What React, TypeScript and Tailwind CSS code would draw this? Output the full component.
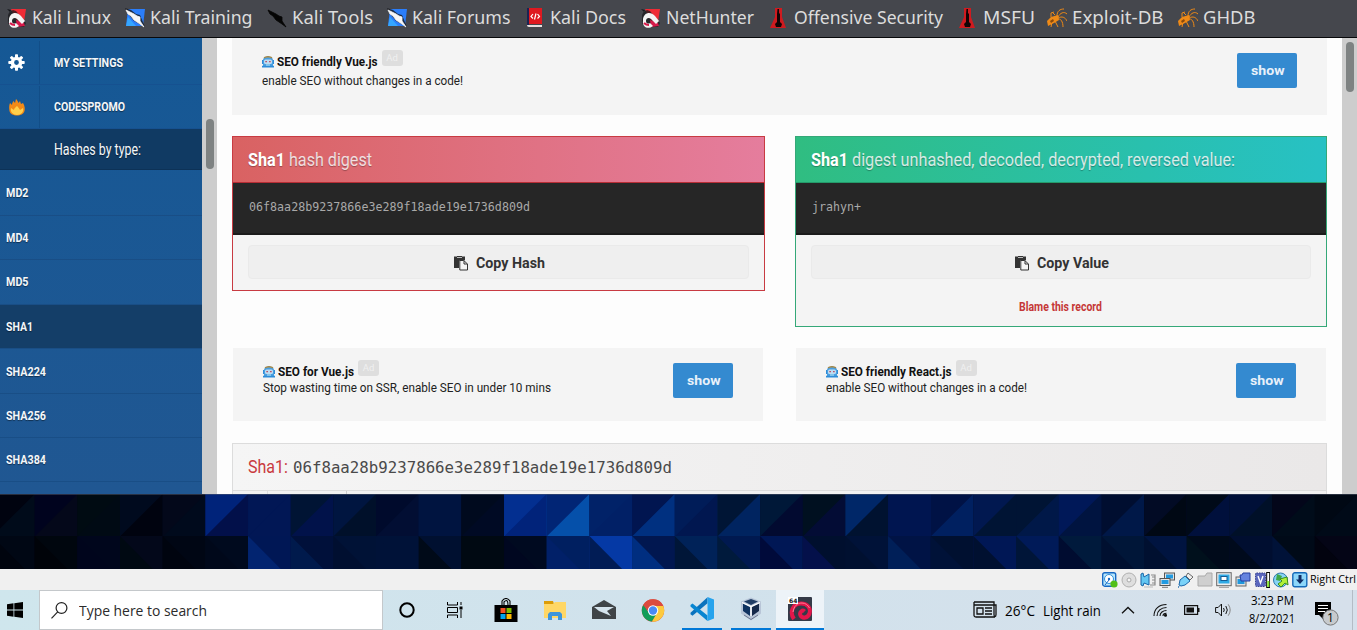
import React, { useLayoutEffect, useRef, useState, type ReactNode } from 'react';

/* Text squeezed or stretched horizontally to a given advance width. */
function Fit({ w, className = '', children }: { w: number; className?: string; children: ReactNode }) {
  const ref = useRef<HTMLSpanElement>(null);
  const [k, setK] = useState(1);
  useLayoutEffect(() => {
    if (ref.current && ref.current.offsetWidth) {
      setK(w / (ref.current.getBoundingClientRect().width || w));
    }
  }, [w]);
  return (
    <span className={`block shrink-0 whitespace-nowrap ${className}`} style={{ width: w }}>
      <span ref={ref} className="inline-block origin-left" style={{ transform: k === 1 ? undefined : `scaleX(${k})` }}>
        {children}
      </span>
    </span>
  );
}

/* ---------- bookmark icons ---------- */
const Magnet = () => (
  <svg className="h-5 w-5" viewBox="0 0 20 20">
    <path d="M4 1h15l-2 13-4 5z" fill="#ef2b35" />
    <path d="M0 1l4 1-1 2z" fill="#15171b" />
    <path d="M1 8q0-4 5-6l3 1 10 12-2 4H5q-5-2-4-8z" fill="#1a1a1e" opacity=".75" />
    <path d="M9 12l8 3 1 3-8 1z" fill="#d6194a" />
    <path d="M2 11C3 4 10 3 14 8l4 5-3 3-5-5c-2-2-5-1-5 2s3 3 4 2l3 3c-5 4-11 1-10-5z" fill="#f4f4f4" />
    <path d="M3 15c2 2 3 2 5 2" stroke="#d6194a" strokeWidth="2" fill="none" />
  </svg>
);
const Dragon = ({ dark = false }: { dark?: boolean }) => (
  <svg className="h-5 w-5" viewBox="0 0 20 20">
    {!dark && <path d="M3 1h17l-2 17H1z" fill="#2b7efb" />}
    {!dark && <path d="M1 18l2-9 8 9z" fill="#35a6ff" />}
    {!dark && <path d="M0 0l6 2 5 4 4 1 5 12-4-2-7-4-6-7z" fill="#17181c" opacity=".8" />}
    <path d="M1 2l4 2 4 2 3 2 3 1 0 4 4 6-4-3-3-2-3-2-3-4-3-2z" fill={dark ? '#050505' : '#f7f7f7'} stroke={dark ? '#050505' : '#f7f7f7'} strokeWidth=".8" />
  </svg>
);
const Docs = () => (
  <svg className="h-5 w-5" viewBox="0 0 20 20">
    <path d="M2 0h15v16H2z" fill="#df1920" />
    <path d="M2 0h2v17H2z" fill="#1c2352" />
    <path d="M2 17h15v2H4q-2 0-2-2z" fill="#e6dfe0" />
    <path d="M8 6L6 8.500l2 2M12.500 6l2 2.500-2 2M11 5.500l-1.500 6" stroke="#fff" strokeWidth="1.200" fill="none" />
  </svg>
);
const Offsec = () => (
  <svg className="h-5 w-5" viewBox="0 0 20 20">
    <path d="M6 0h7v9l4 11H1L6 9z" fill="#cf1a1f" />
    <path d="M8.500 1h1.500v4l1 1v8l2 2-1 3H7l-1-3 2-2V6z" fill="#120405" />
  </svg>
);
const Bug = () => (
  <svg className="h-5 w-5" viewBox="0 0 20 20" fill="none" stroke="#ef8a17" strokeWidth="1">
    <path d="M0 13l4-4 7-2 1 5-5 3-6 3z" fill="#ef8a17" stroke="none" />
    <path d="M10 8C10 3 13 1 17 1M11 9c2-4 6-6 9-3M11 10c4-2 7-1 9 3M10 11c4-1 6 3 6 8M8 13c1 2 2 4 3 6M5 14l-1 5M4 9V5l3-1M8 7l-3-3" />
    <path d="M3 13l3-2 1 2-3 2z" fill="#8a4a0c" stroke="none" />
  </svg>
);

const bookmarks = [
  { icon: <Magnet />, label: 'Kali Linux', w: 79, cell: 'w-[118px]' },
  { icon: <Dragon />, label: 'Kali Training', w: 102.5, cell: 'w-[142px]' },
  { icon: <Dragon dark />, label: 'Kali Tools', w: 81, cell: 'w-[120px]' },
  { icon: <Dragon />, label: 'Kali Forums', w: 98.5, cell: 'w-[138px]' },
  { icon: <Docs />, label: 'Kali Docs', w: 76, cell: 'w-[116px]' },
  { icon: <Magnet />, label: 'NetHunter', w: 88, cell: 'w-[128px]' },
  { icon: <Offsec />, label: 'Offensive Security', w: 149, cell: 'w-[189px]' },
  { icon: <Offsec />, label: 'MSFU', w: 52, cell: 'w-[89px]' },
  { icon: <Bug />, label: 'Exploit-DB', w: 91.5, cell: 'w-[131px]' },
  { icon: <Bug />, label: 'GHDB', w: 52.5, cell: 'w-[90px]' },
];

function BookmarksBar() {
  return (
    <div className="flex h-[38px] shrink-0 items-center border-b border-b-[#08090b] bg-[#45474d] pb-px pl-[7px] font-['Noto_Sans',sans-serif] text-[17.5px] text-[#dcdcdc]">
      {bookmarks.map((b) => (
        <div key={b.label} className={`flex shrink-0 items-center gap-[5px] ${b.cell}`}>
          {b.icon}
          <Fit w={b.w} className="h-9 leading-[34px]">{b.label}</Fit>
        </div>
      ))}
    </div>
  );
}

/* ---------- sidebar ---------- */
const Gear = () => (
  <svg className="h-[17px] w-[17px]" viewBox="0 0 17 17">
    <g fill="#fff">
      <path fillRule="evenodd" d="M8.500 2.700a5.800 5.800 0 1 0 0 11.600 5.800 5.800 0 0 0 0-11.600zm0 3.400a2.400 2.400 0 1 1 0 4.800 2.400 2.400 0 0 1 0-4.800z" />
      {[0, 45, 90, 135, 180, 225, 270, 315].map((a) => (
        <rect key={a} x="7" y=".3" width="3" height="3.500" rx=".7" transform={`rotate(${a} 8.500 8.500)`} />
      ))}
    </g>
  </svg>
);
const Flame = () => (
  <svg className="h-[18px] w-[18px]" viewBox="0 0 18 18">
    <path d="M8 1c1 1 2 2 2.500 4L12 3l1 3 2-1c2 3 2 6 1.500 8-.8 3-4 4.500-7.500 4.500s-7-1.500-7.500-4.500C1 10 1 7 2 5l2 2c0-1 .5-3 1.500-4L7 5z" fill="#f28a17" />
    <path d="M9 8c1 1 2 2 3 4l3-2c1 4-2 7-6 7s-7-3-6-7l3 2c0-2 2-3 3-4z" fill="#ffcf4a" />
  </svg>
);

const rows = [
  { label: 'MD2', w: 22.5, cell: 'h-[46px]' },
  { label: 'MD4', w: 22.5, cell: 'h-[44px]' },
  { label: 'MD5', w: 22.5, cell: 'h-[45px] pb-px' },
  { label: 'SHA1', w: 27, cell: 'h-[44px] bg-[#143e68]' },
  { label: 'SHA224', w: 40, cell: 'h-[45px] pt-px' },
  { label: 'SHA256', w: 40, cell: 'h-[44px]' },
  { label: 'SHA384', w: 40, cell: 'h-[44px] pt-px' },
];

function Sidebar() {
  return (
    <div className="flex h-full w-[202px] shrink-0 flex-col bg-linear-to-b from-[#155895] to-[#205792] font-['Roboto',sans-serif] text-[#f4f7fa] text-shadow-[0_1px_1px_rgb(0_0_0/0.45)]">
      {[
        { icon: <Gear />, label: 'MY SETTINGS', w: 69, cell: 'h-[47px] pt-[3px]' },
        { icon: <Flame />, label: 'CODESPROMO', w: 71, cell: 'h-[44px] pt-[1px]' },
      ].map((s) => (
        <div key={s.label} className={`flex shrink-0 items-center border-b border-[#165190] ${s.cell}`}>
          <div className="flex h-full w-10 items-center justify-center border-r border-[#124e88] pr-[6px]">{s.icon}</div>
          <Fit w={s.w} className="ml-[14px] text-[12px] font-bold">{s.label}</Fit>
        </div>
      ))}
      <div className="flex h-[41px] shrink-0 items-center border-b border-[#0d3257] bg-[#103a63] pl-[54px] pt-px">
        <Fit w={87} className="text-[16px]">Hashes by type:</Fit>
      </div>
      {rows.map((r) => (
        <div key={r.label} className={`flex shrink-0 items-center border-b border-[#194e86] pl-[6px] ${r.cell}`}>
          <Fit w={r.w} className="text-[12px] font-bold">{r.label}</Fit>
        </div>
      ))}
    </div>
  );
}

/* ---------- page content ---------- */
const Robot = () => (
  <svg className="h-3 w-3 shrink-0" viewBox="0 0 12 12">
    <path d="M1 4q0-3 5-3t5 3v7H1z" fill="#4a9fe0" />
    <path d="M2 1.800q4-2.200 8 0" stroke="#a08a52" strokeWidth="1.500" fill="none" />
    <rect x="2" y="3.500" width="8" height="4.500" rx="1.500" fill="#bcdcf2" />
    <path d="M3.300 5h1.700v1.300H3.300zM7 5h1.700v1.300H7z" fill="#b8506a" />
    <path d="M0 4h1v4H0zM11 4h1v4h-1zM0 9.800h12v1.700H0z" fill="#2e8cd8" />
    <path d="M4 9h4" stroke="#dff" strokeWidth=".8" />
  </svg>
);
const Paste = () => (
  <svg className="h-4 w-4" viewBox="0 0 16 16">
    <path d="M1 1.500h3V1h5v.5h3V5H9L6 6v7H1z" fill="#333" />
    <path d="M4 2.500h5" stroke="#bbb" strokeWidth="1" />
    <path d="M6.800 5.500h4l3.700 3.500v6H6.800z" fill="#f5f5f5" stroke="#333" />
    <path d="M11 5.500V9h3.500" fill="none" stroke="#333" />
  </svg>
);

function Ad({ title, tw, body, bw, className, gap }: { title: string; tw: number; body: string; bw: number; className: string; gap: string }) {
  return (
    <div className={`flex items-start justify-between bg-[#f4f4f4] px-[30px] font-['Roboto',sans-serif] text-[12px] ${className}`}>
      <div className={`flex flex-col pt-px ${gap}`}>
        <div className="flex h-4 items-center">
          <Robot />
          <Fit w={tw} className="ml-[3px] font-bold text-[#111]">{title}</Fit>
          <span className="relative -top-1 ml-[4px] flex h-4 w-[21px] items-center justify-center rounded-[3px] bg-[#dedede] text-[9.5px] text-[#f0f0f0]">Ad</span>
        </div>
        <Fit w={bw} className="leading-4 text-[#222]">{body}</Fit>
      </div>
      <button className="flex h-[35px] w-[60px] items-center justify-center rounded-[2px] bg-[#348ad0] pr-[2px] pt-px text-[13px] font-bold text-[#e8f1fa]">
        <Fit w={33.5}>show</Fit>
      </button>
    </div>
  );
}

function HashCard({ title, tw, value, vw, copy, cw, card, head, extra }: { title: string; tw: number; value: string; vw: number; copy: string; cw: number; card: string; head: string; extra?: ReactNode }) {
  return (
    <div className={`flex flex-col border bg-[#f4f4f4] font-['Roboto',sans-serif] ${card}`}>
      <div className={`flex h-[46px] shrink-0 items-center border-b pl-[15px] text-[18px] text-white/80 text-shadow-[0_1px_1px_rgb(0_0_0/0.3)] ${head}`}>
        <Fit w={37} className="font-bold text-white">Sha1</Fit>
        <Fit w={tw} className="ml-1">{title}</Fit>
      </div>
      <div className="flex h-[52px] shrink-0 items-center border-b-2 border-[#1b1b1b] bg-[#262626] pb-[2px] pl-[16px] font-['DejaVu_Sans_Mono',monospace] text-[13px] text-[#a9a9a9]">
        <Fit w={vw}>{value}</Fit>
      </div>
      <div className="px-[15px] pt-[10px]">
        <button className="flex h-[34px] w-full items-center justify-center rounded-[4px] border border-[#eaeaea] bg-[#efefef] pt-[2px] text-[14px] font-bold text-[#333]">
          <Paste />
          <Fit w={cw} className="ml-[7px]">{copy}</Fit>
        </button>
      </div>
      {extra}
    </div>
  );
}

function Content() {
  return (
    <div className="flex h-full min-w-0 flex-1 flex-col bg-[#fdfdfd] px-[15px]">
      <Ad title="SEO friendly Vue.js" tw={100.5} body="enable SEO without changes in a code!" bw={201} gap="gap-[3px]" className="h-[77px] shrink-0 pt-[15px]" />
      <div className="mt-[21px] flex h-[212px] shrink-0 items-start gap-[30px]">
        <HashCard
          title="hash digest" tw={83} value="06f8aa28b9237866e3e289f18ade19e1736d809d" vw={281} copy="Copy Hash" cw={69}
          card="h-[155px] w-[533px] border-[#c83b42]" head="border-[#b72d35] bg-linear-to-r from-[#d96262] to-[#e57d9d]"
        />
        <HashCard
          title="digest unhashed, decoded, decrypted, reversed value:" tw={383} value="jrahyn+" vw={49} copy="Copy Value" cw={72}
          card="h-[191px] w-[532px] border-[#35a878]" head="border-[#259a6a] bg-linear-to-r from-[#30bd81] to-[#27c1c4]"
          extra={
            <div className="flex h-[54px] items-center justify-center pr-px pt-2 text-[12px] font-bold text-[#c53737]">
              <Fit w={83}>Blame this record</Fit>
            </div>
          }
        />
      </div>
      <div className="flex shrink-0 gap-[33px] px-px">
        <Ad title="SEO for Vue.js" tw={76} body="Stop wasting time on SSR, enable SEO in under 10 mins" bw={288} gap="gap-0" className="h-[73px] w-[530px] pt-[15px]" />
        <Ad title="SEO friendly React.js" tw={110.5} body="enable SEO without changes in a code!" bw={201} gap="gap-0" className="h-[73px] w-[530px] pt-[15px]" />
      </div>
      <div className="mt-[22px] flex min-h-0 flex-1 flex-col border border-b-0 border-[#dcdcdc] bg-[#f1f1f1]">
        <div className="flex h-[47px] shrink-0 items-center border-b border-[#dcdcdc] bg-linear-to-r from-[#f5f5f5] to-[#eae8e8] pl-[15px]">
          <Fit w={40} className="pb-px font-['Roboto',sans-serif] text-[18px] text-[#c93a3e]">Sha1:</Fit>
          <Fit w={379} className="ml-[5px] pt-[3px] font-['DejaVu_Sans_Mono',monospace] text-[15px] text-[#4a4a4a]">06f8aa28b9237866e3e289f18ade19e1736d809d</Fit>
        </div>
        <div className="flex h-[4px] shrink-0">
          <div className="w-[35px] border-r border-[#ddd]" />
          <div className="w-[79px] border-r border-[#ccc]" />
        </div>
      </div>
    </div>
  );
}

/* ---------- desktop wallpaper ---------- */
/* Each pair holds the two triangles of one tile. */
const topTiles = '00030f000b1a 00031e04081a 000b12000a14 000a1e00030f 03081a000a1c 00237a02104a 011755011755 00143401124a 00154000102a 000a2c020e33 001440001440 000a1e000a24 032f9001237a 0125750550aa 012268012066 011550003080 001c58011750 001535002460 001838020a30 001020030c35 002768001230 001550001550 001245002060 011850001434 001434001848 001858001440 000e30001848 020b25000814 000a1800103c 001038001028 03061a000c1a 000814000a18'.split(' ');
const lowTiles = '00071400040e 00060e000309 00061c00051c 03081a000912 00061400040f 000a1e00081a 001755022470 00103a001a4c 001236000f30 001238001238 001030000a18 000912000912 000a20000720 001f60012068 0539a5011c55 011750002e80 002258001638 001950001a3c 001755000a3a 000f2e04104a 001238001030 001345001f58 001030001238 001755001030 001a58001538 001a3c000c30 001638001030 001440001030 000a1a00101c 000e30000a1c 000a18001238 04051602030f'.split(' ');

function Wallpaper() {
  const s = 42.67;
  return (
    <svg className="block h-[75px] w-full shrink-0 bg-[#000a1a]" viewBox="0 0 1357 75">
      {topTiles.map((t, i) => {
        const x = -8 + i * s;
        return (
          <g key={i}>
            <rect x={x} y="0" width={s + 0.5} height="42.500" fill={`#${t.slice(6)}`} />
            <polygon points={`${x},0 ${x + s},0 ${x},42.500`} fill={`#${t.slice(0, 6)}`} />
          </g>
        );
      })}
      {lowTiles.map((t, i) => {
        const x = -8 + i * s;
        return (
          <g key={i}>
            <rect x={x} y="42" width={s + 0.5} height="43" fill={`#${t.slice(0, 6)}`} />
            <polygon points={`${x},42 ${x + s},85 ${x},85`} fill={`#${t.slice(6)}`} />
          </g>
        );
      })}
      <path d="M0 .3h1357" stroke="#555e70" strokeWidth=".6" />
    </svg>
  );
}

/* ---------- virtual machine status bar ---------- */
const vmIcons: ReactNode[] = [
  <g key="hd"><rect x=".7" y=".7" width="13" height="13.500" rx="2" fill="#b9e6fb" stroke="#1769c4" strokeWidth="1.400" /><circle cx="7" cy="7" r="4.500" fill="#fff" stroke="#2f92dd" /><circle cx="7" cy="7" r="1.200" fill="#1769c4" /><path d="M3 13l4-5" stroke="#1769c4" /><circle cx="12" cy="12" r="3.600" fill="#52bf18" /></g>,
  <g key="cd"><circle cx="8" cy="8" r="7" fill="#dedede" stroke="#b0b0b0" /><circle cx="8" cy="8" r="2" fill="#f5f5f5" stroke="#a8a8a8" /></g>,
  <g key="audio"><path d="M1 2l2-1 1 4 5-3v11l-5-2-1 3-2-1z" fill="#62c6f2" stroke="#1865a8" /><path d="M11 3h4v10h-5M12 5h3M12 8h3M12 11h3" stroke="#8b8b8b" strokeWidth="1.200" fill="none" /><path d="M4 15h9" stroke="#bbb" /></g>,
  <g key="net"><rect x="5.500" y="1" width="10" height="7" fill="#e4e4e4" stroke="#555" /><path d="M7 2.500h7v4H7z" fill="#229ae0" /><rect x="1" y="6.500" width="10" height="7" fill="#e4e4e4" stroke="#555" /><path d="M2.500 8h7v4h-7z" fill="#229ae0" /><path d="M3 15.300h6" stroke="#777" /></g>,
  <g key="usb"><path d="M10 1l5 4-3 3-4-4z" fill="#eee" stroke="#666" /><path d="M2 8l5-4 5 5-5 4-4 1-2-1z" fill="#7ad2f8" stroke="#1d68aa" /><path d="M1 14l-1 2" stroke="#2d72ad" /></g>,
  <g key="share"><path d="M1 4h7l2-3h5v13H1z" fill="#cfcfcf" stroke="#aaa" /></g>,
  <g key="display"><rect x=".7" y=".7" width="14.500" height="13" fill="#eee" stroke="#666" /><rect x="2.500" y="2.500" width="11" height="9" fill="#2faae5" /><rect x="5" y="4.500" width="6" height="4" fill="#fff" stroke="#155c94" /><path d="M3 15.300h10" stroke="#999" /></g>,
  <g key="rec"><rect x="1" y="5" width="10" height="9" fill="#e2e2e2" stroke="#666" /><rect x="2.500" y="7" width="7" height="5" fill="#2098dd" /><path d="M5 3h2l1-2h7v8H6z" fill="#6583df" stroke="#273f9e" /></g>,
  <g key="cpu"><rect x="1.500" y="1" width="10" height="13.500" rx="1" fill="#5a66bd" stroke="#3a438f" strokeDasharray="1.500 1" /><path d="M4 4l2.500 7L9 4" stroke="#fff" strokeWidth="1.400" fill="none" /><rect x="12.700" y=".5" width="3" height="15" fill="#fff" stroke="#000" /><path d="M13.300 9h1.900v6h-1.900z" fill="#83e629" /></g>,
  <g key="mouse"><circle cx="7.500" cy="8" r="7" fill="#87d3f5" stroke="#2d78aa" /><path d="M4 2l5 2-2 5-4-1z" fill="#3fa846" /><path d="M7 7l7-2 1 8-3-2-4 4-3-3 4-3z" fill="#b2ef38" stroke="#3a8f1c" /></g>,
  <g key="host"><rect x=".8" y=".8" width="14" height="14" rx="2" fill="#8dd7fa" stroke="#1469b8" strokeWidth="1.400" /><path d="M6.500 3h3v4.500H12L8 12 4 7.500h2.500z" fill="#102e65" /></g>,
];

function VmStatusBar() {
  return (
    <div className="flex h-[21px] shrink-0 items-center justify-end gap-[3px] bg-[#f0f0f0]">
      {vmIcons.map((g, i) => (
        <svg key={i} className="h-4 w-4 shrink-0" viewBox="0 0 16 16">{g}</svg>
      ))}
      <Fit w={46} className="-ml-px mr-px font-['Open_Sans',sans-serif] text-[11px] text-black">Right Ctrl</Fit>
    </div>
  );
}

/* ---------- taskbar ---------- */
const apps: { key: string; svg: ReactNode; cls: string }[] = [
  {
    key: 'store', cls: '',
    svg: <g><path d="M8 7V3q4-5 8 0v4M10 7V4q4-4 4 3" fill="none" stroke="#000" strokeWidth="1.100" /><path d="M.5 7h23v17H.5z" fill="#000" /><path d="M6.500 10h5v5h-5z" fill="#f25022" /><path d="M12.500 10h5v5h-5z" fill="#7fba00" /><path d="M6.500 16h5v5h-5z" fill="#00a4ef" /><path d="M12.500 16h5v5h-5z" fill="#ffb900" /></g>,
  },
  {
    key: 'files', cls: '',
    svg: <g><path d="M1 3h9l1 3H1z" fill="#dc9c08" /><path d="M1 6h9l2-2h11v16H1z" fill="#ffd766" /><path d="M5 22v-6l2-2h10l2 2v6h-4v-4H9v4z" fill="#3c95dc" /></g>,
  },
  {
    key: 'mail', cls: '',
    svg: <g><path d="M0 9l12-7 12 7v12H0z" fill="#3f4447" /><path d="M2 9h20l-7 4 4 5-12-5z" fill="#d5e4ed" /></g>,
  },
  {
    key: 'chrome', cls: '',
    svg: <g><circle cx="12" cy="12.500" r="11.200" fill="#dc4b3e" /><path d="M12 12.500L2.200 7A11.200 11.200 0 0 0 11 23.600l5.500-8.600z" fill="#109d59" /><path d="M12 8h10.300A11.200 11.200 0 0 1 11 23.600L16 15z" fill="#fdca3e" /><path d="M2.200 7A11.200 11.200 0 0 1 22.300 8H12a5 5 0 0 0-4.700 6z" fill="#dc4b3e" /><circle cx="12" cy="12.500" r="5.200" fill="#fff" /><circle cx="12" cy="12.500" r="4.200" fill="#4a8af4" /></g>,
  },
  {
    key: 'code', cls: 'border-b-2 border-[#0078d7] mx-[4.5px] w-[40px]',
    svg: <g><path d="M17.500 6L2.500 18.500.500 17V15.500L17.500 0z" fill="#0a72bd" transform="translate(0 .3)" /><path d="M17.500 18.500L2.500 6.500.500 8v1.500l17 14.500z" fill="#0785d1" /><path d="M17.500 0L24 2.500v19L17.500 24z" fill="#26a3ed" /></g>,
  },
  {
    key: 'vbox', cls: 'border-b-2 border-[#0078d7] mx-[4.5px] w-[40px]',
    svg: <g><path d="M12 .5l10 4v12l-10 7-10-7v-12z" fill="#b8c5d7" /><path d="M12 2l7 2.500-7 3.500-7-3.500z" fill="#203d65" /><path d="M4 6.500l7 3.500v9L4 14z" fill="#0f3260" /><path d="M20 6.500L13 10v9l7-5z" fill="#15294a" /><path d="M12 9v10M3 5.500l9 4 9-4" stroke="#fff" strokeWidth="1.200" fill="none" /><path d="M5 18l7 4.500 7-4.500" stroke="#6d7891" fill="none" /></g>,
  },
  {
    key: 'vm', cls: 'border-b-2 border-[#0078d7] bg-[#edf3f8] w-[48px] ml-px',
    svg: <g><rect width="24" height="24" rx="1" fill="#343a48" /><path d="M6 22C1 15 5 6.500 13 6.500c7 0 10 5 8.500 10-1.500 4.500-7 5.500-9 2-1.500-3.500 2-6 4-4" fill="none" stroke="#e3164a" strokeWidth="4" /><path d="M5 15c1-6 4-9 9-9 4 0 6 2.500 7.500 5" fill="none" stroke="#ff7d94" strokeWidth="1" /><path d="M0 0h10v7H0z" fill="#fff" /><text x="1" y="5.700" fontSize="6" fontWeight="700" fontFamily="DejaVu Sans" fill="#111">64</text></g>,
  },
];

function Taskbar() {
  return (
    <div className="flex h-10 shrink-0 items-center bg-linear-to-r from-[#cfe6ed] via-[#d1e2ec] to-[#d6e0eb] font-['Open_Sans',sans-serif] text-black">
      <div className="flex w-[39px] shrink-0 items-center pl-[7px]">
        <svg className="h-4 w-4" viewBox="0 0 16 16"><path d="M0 2.200L6.500 1.300v6.200H0zM7.300 1.200L16 0v7.500H7.300zM0 8.400h6.500v6.300L0 13.800zM7.300 8.400H16V16l-8.700-1.200z" /></svg>
      </div>
      <div className="flex h-10 w-[344px] shrink-0 items-center border border-[#c4c8cb] bg-white pl-[11px]">
        <svg className="h-[17px] w-[17px]" viewBox="0 0 17 17" fill="none" stroke="#222" strokeWidth="1.200"><circle cx="10.500" cy="6" r="5.400" /><path d="M6.700 9.800L.5 16.300" /></svg>
        <Fit w={128} className="ml-[11px] pt-px text-[14.5px] text-[#2b2b2b]">Type here to search</Fit>
      </div>
      <div className="flex w-12 shrink-0 justify-center">
        <svg className="h-4 w-4" viewBox="0 0 16 16"><circle cx="8" cy="8" r="6.700" fill="none" stroke="#000" strokeWidth="2" /></svg>
      </div>
      <div className="mr-[2px] flex w-12 shrink-0 justify-center">
        <svg className="h-4 w-[17px]" viewBox="0 0 17 16" fill="none" stroke="#000"><path d="M.5 0v3h10V0M.5 5.500h10v5H.5zM.5 16v-3h10v3M14 0v3M14 8v8" /><path d="M12.500 4.500h3v3h-3z" fill="#000" stroke="none" /></svg>
      </div>
      {apps.map((a) => (
        <div key={a.key} className={`flex h-10 shrink-0 items-center justify-center ${a.cls || 'w-[49px]'}`}>
          <svg className="h-6 w-6 shrink-0" viewBox="0 0 24 24">{a.svg}</svg>
        </div>
      ))}
      <div className="ml-auto flex h-10 w-[384px] shrink-0 items-center">
        <svg className="h-[18px] w-6" viewBox="0 0 24 18" fill="none" stroke="#111" strokeWidth="1.300"><path d="M1 1h20v12.500q0 2 1 2t1-2V4h-2M1 1v13.500q0 1.500 2 1.500h19M1 4h20M4 7h6v6H4zM12 7h7M12 10h7M12 13h7" /></svg>
        <Fit w={30} className="ml-[8px] pt-px text-[14px]">26°C</Fit>
        <Fit w={58} className="ml-[8px] pt-px text-[14px]">Light rain</Fit>
        <svg className="ml-[20px] h-[8px] w-[14px]" viewBox="0 0 14 8"><path d="M1 7.300L7 1.500l6 5.800" fill="none" stroke="#111" strokeWidth="1.300" /></svg>
        <svg className="ml-[18px] h-[14px] w-[15px]" viewBox="0 0 15 14" fill="none" stroke="#111" strokeWidth="1.100"><path d="M1 13C1 6 6 1.500 13.500 1.500M4 13c0-5 4-8.500 9.500-8.500M7 13c0-3.300 3-5.500 6.500-5.500M10 13c0-2 1.500-2.700 3.500-2.700" /><circle cx="12.500" cy="12.300" r="1" fill="#111" /></svg>
        <svg className="ml-[16px] h-[10px] w-[16px]" viewBox="0 0 16 10"><path d="M.6.600h13v8.800H.6z" fill="none" stroke="#111" strokeWidth="1.200" /><path d="M2.500 2.500h7.500v5H2.500zM14 3h1.500v4H14z" fill="#111" /></svg>
        <svg className="ml-[15px] h-[14px] w-[17px]" viewBox="0 0 17 14" fill="none" stroke="#111"><path d="M.6 4.500h2.500L6.500 1v12L3.100 9.500H.6zM8.500 5q1.500 2 0 4M10.800 3q3 4 0 8" /><path d="M13.200 1.300q4 5.700 0 11.400" stroke="#888" /></svg>
        <div className="ml-[17px] flex h-10 w-[46px] flex-col items-center justify-center gap-[2px] text-[12px] leading-4">
          <Fit w={43}>3:23 PM</Fit>
          <Fit w={46}>8/2/2021</Fit>
        </div>
        <svg className="ml-[20px] mt-[8px] h-[26px] w-[25px]" viewBox="0 0 25 26">
          <path d="M0 1h16v13H8v4l-4-4H0z" fill="#000" />
          <path d="M3 4.500h10M3 7.500h10M3 10.500h7" stroke="#fff" />
          <circle cx="15.500" cy="16.500" r="7.600" fill="#c7cacd" stroke="#777" />
          <text x="15.500" y="21" textAnchor="middle" fontSize="12" fontFamily="Open Sans">1</text>
        </svg>
        <div className="ml-auto mr-[4px] h-10 w-px bg-[#b4bcc5]" />
      </div>
    </div>
  );
}

export default function App() {
  return (
    <div className="flex h-[630px] w-[1357px] flex-col overflow-hidden bg-[#fdfdfd]">
      <BookmarksBar />
      <div className="flex h-[456px] shrink-0 overflow-hidden">
        <Sidebar />
        <div className="w-[15px] shrink-0 bg-[#cdcdcd] pl-[3.5px] pt-[81px]">
          <div className="h-[50px] w-2 rounded-full bg-[#7e8282]" />
        </div>
        <Content />
        <div className="w-[15px] shrink-0 bg-[#cdcdcd] pl-[3.5px] pt-[4px]">
          <div className="h-[50px] w-2 rounded-full bg-[#7e8282]" />
        </div>
      </div>
      <Wallpaper />
      <VmStatusBar />
      <Taskbar />
    </div>
  );
}
